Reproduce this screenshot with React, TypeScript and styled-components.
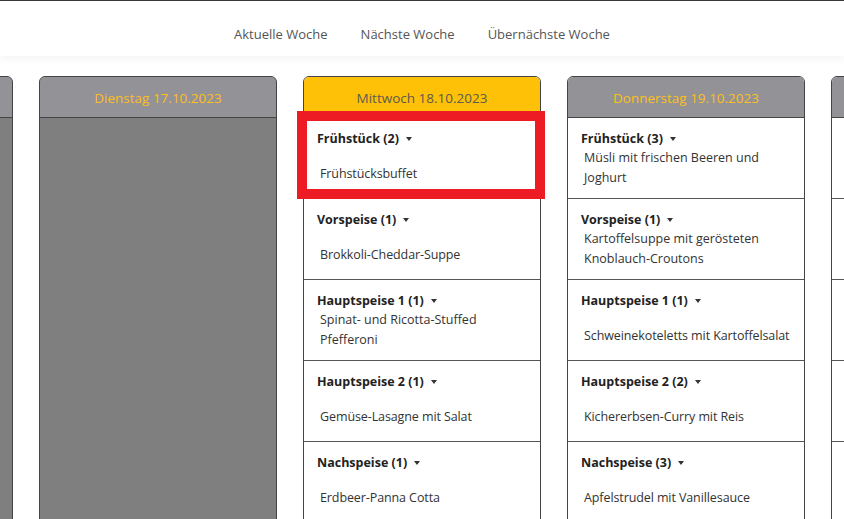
import React from "react";
import styled, { createGlobalStyle } from "styled-components";

const Global = createGlobalStyle`
  html, body { margin: 0; padding: 0; background: #fff; }
  body { font-family: "Open Sans", "Noto Sans", sans-serif; overflow: hidden; }
  * { box-sizing: border-box; }
`;

const Page = styled.div`
  width: 844px;
  height: 519px;
  overflow: hidden;
  position: relative;
  border-top: 1px solid #3a3a3a;
`;

const Nav = styled.nav`
  height: 55px;
  background: #fff;
  box-shadow: 0 3px 8px rgba(0, 0, 0, 0.05);
  display: flex;
  justify-content: center;
  align-items: center;
  gap: 33px;
  padding-top: 10px;
`;

const NavLink = styled.a`
  font-size: 13px;
  color: #555;
  text-decoration: none;
  cursor: pointer;
`;

const Week = styled.div`
  display: flex;
  justify-content: center;
  gap: 26px;
  margin-top: 20px;
`;

const Card = styled.div<{ $past?: boolean }>`
  flex: 0 0 238px;
  width: 238px;
  height: 460px;
  border: 1px solid #444;
  border-radius: 6px 6px 0 0;
  overflow: hidden;
  background: ${(p) => (p.$past ? "#7f7f80" : "#fff")};
`;

const CardHeader = styled.div<{ $today?: boolean }>`
  height: 41px;
  background: ${(p) => (p.$today ? "#ffc107" : "#939296")};
  color: ${(p) => (p.$today ? "#5c5a50" : "#fcbf1e")};
  border-bottom: 1px solid #444;
  display: flex;
  align-items: center;
  justify-content: center;
  font-size: 13.5px;
  padding-top: 2px;
`;

const Row = styled.div`
  height: 81px;
  border-bottom: 1px solid #555;
  padding: 11px 13px 0;
`;

const Title = styled.div`
  font-size: 12.5px;
  font-weight: 700;
  line-height: 20px;
  color: #222;
  display: flex;
  align-items: center;
`;

const Caret = styled.span`
  display: inline-block;
  width: 0;
  height: 0;
  margin-left: 7px;
  border-top: 4px solid #333;
  border-left: 3.5px solid transparent;
  border-right: 3.5px solid transparent;
`;

const Item = styled.div<{ $single?: boolean }>`
  font-size: 12.5px;
  line-height: 20px;
  color: #333;
  padding-left: 3px;
  padding-top: ${(p) => (p.$single ? "15px" : "0")};
  margin-top: ${(p) => (p.$single ? "0" : "-1px")};
  white-space: ${(p) => (p.$single ? "nowrap" : "normal")};
  letter-spacing: ${(p) => (p.$single ? "-0.1px" : "0")};
`;

const Highlight = styled.div`
  position: absolute;
  left: 297px;
  top: 110px;
  width: 248px;
  height: 88px;
  border: 10px solid #ed1c24;
  pointer-events: none;
`;

type Meal = { title: string; item: string; single: boolean };

const wed: Meal[] = [
  { title: "Frühstück (2)", item: "Frühstücksbuffet", single: true },
  { title: "Vorspeise (1)", item: "Brokkoli-Cheddar-Suppe", single: true },
  { title: "Hauptspeise 1 (1)", item: "Spinat- und Ricotta-Stuffed Pfefferoni", single: false },
  { title: "Hauptspeise 2 (1)", item: "Gemüse-Lasagne mit Salat", single: true },
  { title: "Nachspeise (1)", item: "Erdbeer-Panna Cotta", single: true },
];

const thu: Meal[] = [
  { title: "Frühstück (3)", item: "Müsli mit frischen Beeren und Joghurt", single: false },
  { title: "Vorspeise (1)", item: "Kartoffelsuppe mit gerösteten Knoblauch-Croutons", single: false },
  { title: "Hauptspeise 1 (1)", item: "Schweinekoteletts mit Kartoffelsalat", single: true },
  { title: "Hauptspeise 2 (2)", item: "Kichererbsen-Curry mit Reis", single: true },
  { title: "Nachspeise (3)", item: "Apfelstrudel mit Vanillesauce", single: true },
];

const fri: Meal[] = [
  { title: "Frühstück (1)", item: "Rührei mit Speck", single: true },
  { title: "Vorspeise (1)", item: "Tomatensuppe", single: true },
  { title: "Hauptspeise 1 (1)", item: "Wiener Schnitzel", single: true },
  { title: "Hauptspeise 2 (1)", item: "Gemüsepfanne", single: true },
  { title: "Nachspeise (1)", item: "Obstsalat", single: true },
];

const days = [
  { label: "Montag 16.10.2023", past: true, meals: [] as Meal[] },
  { label: "Dienstag 17.10.2023", past: true, meals: [] as Meal[] },
  { label: "Mittwoch 18.10.2023", today: true, meals: wed },
  { label: "Donnerstag 19.10.2023", meals: thu },
  { label: "Freitag 20.10.2023", meals: fri },
];

export default function App() {
  return (
    <Page>
      <Global />
      <Nav>
        <NavLink>Aktuelle Woche</NavLink>
        <NavLink>Nächste Woche</NavLink>
        <NavLink>Übernächste Woche</NavLink>
      </Nav>
      <Week>
        {days.map((d) => (
          <Card key={d.label} $past={d.past}>
            <CardHeader $today={d.today}>{d.label}</CardHeader>
            {d.meals.map((m) => (
              <Row key={m.title}>
                <Title>
                  {m.title}
                  <Caret />
                </Title>
                <Item $single={m.single}>{m.item}</Item>
              </Row>
            ))}
          </Card>
        ))}
      </Week>
      <Highlight />
    </Page>
  );
}
